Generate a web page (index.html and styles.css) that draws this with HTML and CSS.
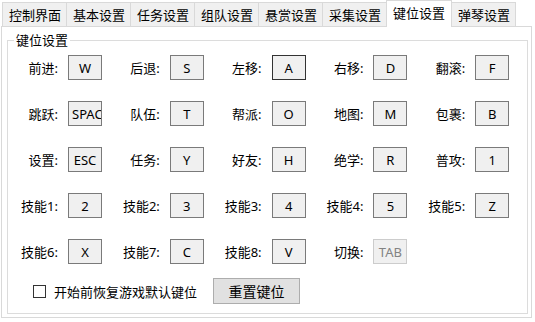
FILE: index.html
```html
<!DOCTYPE html>
<html lang="zh-CN">
<head>
<meta charset="utf-8">
<title>键位设置</title>
<link rel="stylesheet" href="styles.css">
</head>
<body>
<div class="window">
  <div class="tabs">
    <div class="tab">控制界面</div>
    <div class="tab">基本设置</div>
    <div class="tab">任务设置</div>
    <div class="tab">组队设置</div>
    <div class="tab">悬赏设置</div>
    <div class="tab">采集设置</div>
    <div class="tab active">键位设置</div>
    <div class="tab">弹琴设置</div>
  </div>
  <div class="panel">
    <fieldset class="group">
      <legend class="legend">键位设置</legend>
      <div class="grid">
        <div class="cell"><span class="lbl">前进:</span><span class="key">W</span></div>
        <div class="cell"><span class="lbl">后退:</span><span class="key">S</span></div>
        <div class="cell"><span class="lbl">左移:</span><span class="key focus">A</span></div>
        <div class="cell"><span class="lbl">右移:</span><span class="key">D</span></div>
        <div class="cell"><span class="lbl">翻滚:</span><span class="key">F</span></div>

        <div class="cell"><span class="lbl">跳跃:</span><span class="key clip">SPACE</span></div>
        <div class="cell"><span class="lbl">队伍:</span><span class="key">T</span></div>
        <div class="cell"><span class="lbl">帮派:</span><span class="key">O</span></div>
        <div class="cell"><span class="lbl">地图:</span><span class="key">M</span></div>
        <div class="cell"><span class="lbl">包裹:</span><span class="key">B</span></div>

        <div class="cell"><span class="lbl">设置:</span><span class="key">ESC</span></div>
        <div class="cell"><span class="lbl">任务:</span><span class="key">Y</span></div>
        <div class="cell"><span class="lbl">好友:</span><span class="key">H</span></div>
        <div class="cell"><span class="lbl">绝学:</span><span class="key">R</span></div>
        <div class="cell"><span class="lbl">普攻:</span><span class="key">1</span></div>

        <div class="cell"><span class="lbl">技能1:</span><span class="key">2</span></div>
        <div class="cell"><span class="lbl">技能2:</span><span class="key">3</span></div>
        <div class="cell"><span class="lbl">技能3:</span><span class="key">4</span></div>
        <div class="cell"><span class="lbl">技能4:</span><span class="key">5</span></div>
        <div class="cell"><span class="lbl">技能5:</span><span class="key">Z</span></div>

        <div class="cell"><span class="lbl">技能6:</span><span class="key">X</span></div>
        <div class="cell"><span class="lbl">技能7:</span><span class="key">C</span></div>
        <div class="cell"><span class="lbl">技能8:</span><span class="key">V</span></div>
        <div class="cell"><span class="lbl">切换:</span><span class="key disabled">TAB</span></div>
      </div>
      <div class="footer">
        <label class="check"><span class="box"></span><span>开始前恢复游戏默认键位</span></label>
        <button class="btn" type="button">重置键位</button>
      </div>
    </fieldset>
  </div>
</div>
</body>
</html>
```
FILE: styles.css
```css
* { box-sizing: border-box; }

html, body {
  margin: 0;
  background: #ffffff;
}

body {
  width: 535px;
  height: 322px;
  overflow: hidden;
  font-family: "Noto Sans", "Noto Sans CJK SC", sans-serif;
  font-size: 13px;
  color: #000;
}

.tabs {
  display: flex;
  align-items: flex-end;
  height: 26px;
  padding-left: 2px;
  position: relative;
  z-index: 1;
}

.tab {
  height: 24px;
  padding: 0 5px 0 6px;
  margin-left: -1px;
  border: 1px solid #d9d9d9;
  border-bottom: none;
  background: #f0f0f0;
  line-height: 24px;
  white-space: nowrap;
}

.tab:first-child { margin-left: 0; }

.tab.active {
  height: 27px;
  margin-bottom: -1px;
  padding: 0 6px;
  background: #ffffff;
  line-height: 24px;
  position: relative;
  z-index: 2;
}

.panel {
  width: 531px;
  height: 292px;
  margin-left: 1px;
  border: 1px solid #d9d9d9;
  background: #ffffff;
  padding: 6px 0 0 5px;
}

.group {
  width: 521px;
  height: 281px;
  margin: 0;
  padding: 8px 0 0 0;
  border: 1px solid #dcdcdc;
}

.legend {
  margin-left: 6px;
  padding: 0 2px;
  line-height: 14px;
}

.grid {
  display: grid;
  grid-template-columns: 94px repeat(4, 101.8px);
  grid-auto-rows: 25px;
  row-gap: 21px;
}

.cell {
  display: flex;
  align-items: center;
}

.lbl {
  flex: 1;
  text-align: right;
  padding-right: 10px;
  white-space: nowrap;
}

.key {
  width: 34px;
  height: 25px;
  flex: none;
  border: 1px solid #7a7a7a;
  background: #f0f0f0;
  display: flex;
  align-items: center;
  justify-content: center;
  overflow: hidden;
  white-space: nowrap;
  font-size: 13px;
}

.key.clip {
  justify-content: flex-start;
  padding-left: 3px;
}

.key.focus { border-color: #333333; }

.key.disabled {
  border-color: #cccccc;
  color: #838383;
}

.footer {
  display: flex;
  align-items: center;
  margin-top: 14px;
  padding-left: 25px;
}

.check {
  display: flex;
  align-items: center;
  gap: 8px;
}

.box {
  width: 13px;
  height: 13px;
  border: 1px solid #333333;
  background: #ffffff;
}

.btn {
  margin-left: 16px;
  width: 87px;
  height: 26px;
  padding: 0;
  border: 1px solid #adadad;
  background: #e1e1e1;
  font-family: inherit;
  font-size: 14px;
  color: #000;
}
```
